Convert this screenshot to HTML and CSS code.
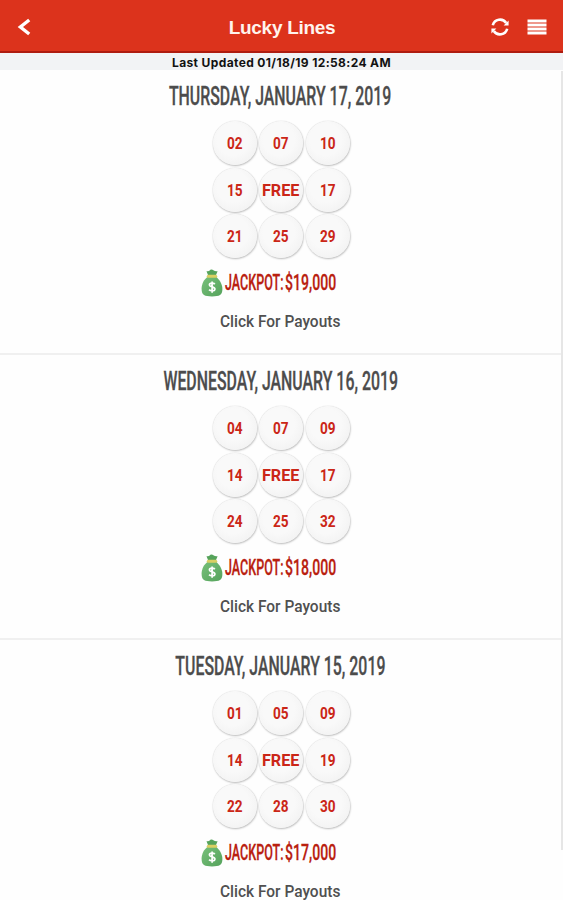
FILE: index.html
```html
<!DOCTYPE html>
<html lang="en">
<head>
<meta charset="utf-8">
<title>Lucky Lines</title>
<link rel="stylesheet" href="styles.css">
</head>
<body>
<svg width="0" height="0" class="defs">
  <defs>
    <linearGradient id="bagfill" x1="0" y1="0" x2="1" y2="1">
      <stop offset="0" stop-color="#78c07a"/><stop offset="1" stop-color="#55a35c"/>
    </linearGradient>
    <symbol id="bag" viewBox="0 0 22 28">
      <path d="M5.5 2.2 Q8 2.8 9.3 .8 Q11 -.2 12.4 1.2 Q14 2.6 16.6 2.2 L14.6 7 H7.4Z" fill="#55a35b"/>
      <path d="M7 7.5 C3 10.5 .6 14.5 .6 20 C.6 26 3.5 27.4 11 27.4 S21.4 26 21.4 20 C21.4 14.5 18 10.5 15 7.5Z" fill="url(#bagfill)"/>
      <rect x="5.8" y="5.7" width="10.4" height="3" rx="1.5" fill="#d9cf62"/>
      <path d="M13.8 15.2 C12.8 13.8 8.5 13.6 8.4 16 C8.4 18.4 13.9 17.2 13.9 20 C13.9 22.3 9.4 22.2 8.1 20.6 M11.1 12.5 V23.8" fill="none" stroke="#fff" stroke-width="1.7"/>
    </symbol>
  </defs>
</svg>
<header class="bar">
  <svg class="back" width="14" height="18" viewBox="0 0 14 18"><path d="M12.2 2 L3.4 9 L12.2 16" fill="none" stroke="#fff" stroke-width="3.4"/></svg>
  <h1>Lucky Lines</h1>
  <div class="actions">
    <svg width="18" height="18" viewBox="0 0 18 18"><path d="M1.8 7.2 A7.4 7.4 0 0 1 15.2 5 M16.2 10.8 A7.4 7.4 0 0 1 2.8 13" fill="none" stroke="#fff" stroke-width="2.6"/><path d="M17.6 2.6 V7.6 H12.6Z M.4 15.4 V10.4 H5.4Z" fill="#fff"/></svg>
    <svg width="20" height="16" viewBox="0 0 20 16"><path d="M.5 2 H19.5 M.5 6 H19.5 M.5 10 H19.5 M.5 14 H19.5" stroke="#fff" stroke-width="3"/></svg>
  </div>
</header>
<p class="updated">Last Updated 01/18/19 12:58:24 AM</p>
<main>
  <section class="draw">
    <h2><span class="date">THURSDAY, JANUARY 17, 2019</span></h2>
    <div class="balls"><b><i>02</i></b><b><i>07</i></b><b><i>10</i></b><b><i>15</i></b><b><i class="free">FREE</i></b><b><i>17</i></b><b><i>21</i></b><b><i>25</i></b><b><i>29</i></b></div>
    <div class="jackpot"><svg width="22" height="28"><use href="#bag"/></svg><span class="label">JACKPOT: </span><span class="amount">$19,000</span></div>
    <a class="payouts">Click For Payouts</a>
  </section>
  <section class="draw">
    <h2><span class="date">WEDNESDAY, JANUARY 16, 2019</span></h2>
    <div class="balls"><b><i>04</i></b><b><i>07</i></b><b><i>09</i></b><b><i>14</i></b><b><i class="free">FREE</i></b><b><i>17</i></b><b><i>24</i></b><b><i>25</i></b><b><i>32</i></b></div>
    <div class="jackpot"><svg width="22" height="28"><use href="#bag"/></svg><span class="label">JACKPOT: </span><span class="amount">$18,000</span></div>
    <a class="payouts">Click For Payouts</a>
  </section>
  <section class="draw">
    <h2><span class="date">TUESDAY, JANUARY 15, 2019</span></h2>
    <div class="balls"><b><i>01</i></b><b><i>05</i></b><b><i>09</i></b><b><i>14</i></b><b><i class="free">FREE</i></b><b><i>19</i></b><b><i>22</i></b><b><i>28</i></b><b><i>30</i></b></div>
    <div class="jackpot"><svg width="22" height="28"><use href="#bag"/></svg><span class="label">JACKPOT: </span><span class="amount">$17,000</span></div>
    <a class="payouts">Click For Payouts</a>
  </section>
</main>
<div class="scroll"></div>
</body>
</html>
```
FILE: styles.css
```css
* { box-sizing: border-box; }
body { margin: 0; height: 900px; overflow: hidden; background: #fefefe; font-family: Roboto, sans-serif; position: relative; }
h1, h2, p { margin: 0; }
.defs { position: absolute; }
.bar { height: 53px; background: #dc331c; border-bottom: 2px solid #ae1c10; display: grid; grid-template-columns: 1fr auto 1fr; align-items: center; padding: 3px 16px 0 17px; }
.bar h1 { font: 700 19px/24px "Liberation Sans", sans-serif; letter-spacing: -.3px; color: #fff4ee; padding-top: 1px; }
.actions { display: flex; justify-content: flex-end; align-items: center; gap: 18px; }
.updated { height: 17px; background: #f2f3f5; text-align: center; font: 700 12px/19px Inter, sans-serif; letter-spacing: .38px; color: #111; white-space: nowrap; }
.draw { height: 285px; padding-right: 2px; display: flex; flex-direction: column; align-items: center; border-bottom: 2px solid #f0f0f0; overflow: hidden; }
.draw h2 { height: 51px; padding-top: 10px; font-size: 25px; line-height: 33px; font-weight: 500; color: #4c4c4c; white-space: nowrap; }
.date { display: inline-block; transform: scaleX(.635); -webkit-text-stroke: .3px #4c4c4c; }
.balls { display: grid; grid-template-columns: repeat(3, 44px); grid-auto-rows: 44px; gap: 2.5px; margin-left: 1px; }
.balls b { border-radius: 50%; background: radial-gradient(circle at 45% 42%, #f9f9f9 45%, #eee 100%); box-shadow: 0 0 1px #bbb, .5px 1px 2px #bbb; display: flex; align-items: center; justify-content: center; color: #cb2617; font-size: 17px; font-weight: 700; }
.balls i { font-style: normal; transform: scaleX(.8); }
.balls .free { transform: scaleX(.95); }
.jackpot { height: 28px; width: 136px; margin-top: 11px; display: flex; align-items: center; margin-left: -23px; }
.jackpot svg { flex: none; }
.jackpot span { flex: none; color: #b9200f; font-size: 22px; font-weight: 500; line-height: 30px; white-space: nowrap; transform-origin: left; -webkit-text-stroke: .3px #b9200f; }
.jackpot .label { width: 60px; margin-left: 2px; transform: scaleX(.57); }
.jackpot .amount { transform: scaleX(.64); }
.payouts { margin-top: 12px; color: #505050; font-size: 17px; line-height: 24px; font-weight: 500; white-space: nowrap; transform: scaleX(.91); }
.scroll { position: absolute; right: 0; top: 71px; width: 2px; height: 779px; background: #e6e6e6; }
```
